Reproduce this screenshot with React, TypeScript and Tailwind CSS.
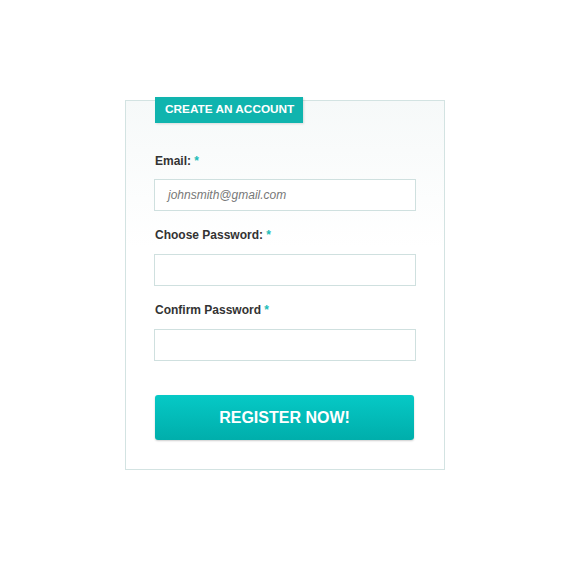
import React from "react";

export default function App() {
  return (
    <div className="w-[570px] h-[570px] bg-white flex justify-center pt-[100px]" style={{ fontFamily: '"Liberation Sans", Arial, sans-serif' }}>
      <div className="relative w-[320px] h-[370px] border border-[#d3e3e2] bg-gradient-to-b from-[#f6f9f9] to-white to-[40%] pl-[28px] pr-[28px] pt-[52px] flex flex-col">
        <div className="absolute left-[29px] top-[-4px] h-[26px] pl-[10px] pr-[9px] bg-[#10b4ae] text-white font-bold text-[11.8px] flex items-center shadow-[1px_1px_2px_rgba(0,0,0,0.12)]">
          CREATE AN ACCOUNT
        </div>
        <label className="h-[16px] leading-[16px] text-[12px] font-bold text-[#333] pl-[1px]">
          Email: <span className="text-[#22bcb8]">*</span>
        </label>
        <div className="mt-[10px] h-[32px] border border-[#cfe0df] bg-white flex items-center pl-[13px]">
          <span className="italic text-[12px] text-[#777]">johnsmith@gmail.com</span>
        </div>
        <label className="mt-[16px] h-[16px] leading-[16px] text-[12px] font-bold text-[#333] pl-[1px]">
          Choose Password: <span className="text-[#22bcb8]">*</span>
        </label>
        <div className="mt-[11px] h-[32px] border border-[#cfe0df] bg-white" />
        <label className="mt-[16px] h-[16px] leading-[16px] text-[12px] font-bold text-[#333] pl-[1px]">
          Confirm Password <span className="text-[#22bcb8]">*</span>
        </label>
        <div className="mt-[11px] h-[32px] border border-[#cfe0df] bg-white" />
        <button className="mt-[34px] ml-[1px] w-[259px] h-[45px] rounded-[3px] bg-gradient-to-b from-[#06c9c6] to-[#00aeab] text-white font-bold text-[16px] shadow-[0_1px_2px_rgba(0,0,0,0.2)] flex items-center justify-center">
          REGISTER NOW!
        </button>
      </div>
    </div>
  );
}
